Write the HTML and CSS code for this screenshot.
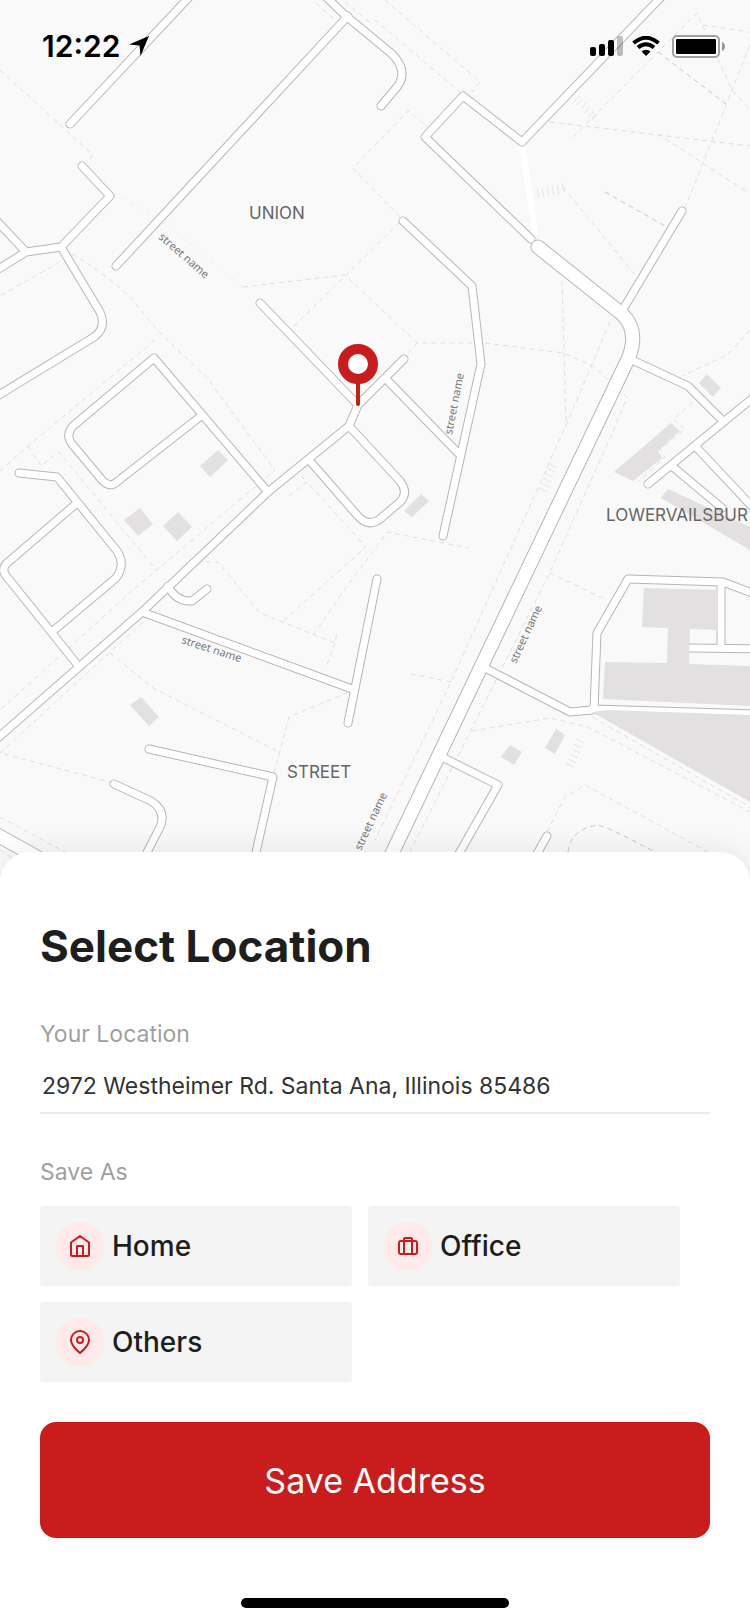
FILE: index.html
```html
<!DOCTYPE html>
<html lang="en">
<head>
<meta charset="utf-8">
<meta name="viewport" content="width=device-width, initial-scale=1">
<title>Select Location</title>
<link rel="stylesheet" href="styles.css">
</head>
<body>
<main class="screen">
  <section class="map" aria-label="Map">
    <svg class="map-canvas" viewBox="0 0 750 882">
      <defs>
        <g id="roads">
          <path d="M194 -8L70 124M348 16L116 266M324 -5L346 16L392 54Q409 71 397 87L381 106"/>
          <path d="M82 166L110 196L61 247L26 252L-6 218M26 252L-8 273M61 247L100 312Q107 328 94 337L-6 398"/>
          <path d="M201 416L118 481Q110 489 102 480L72 444Q65 435 73 426L154 358L268 492"/>
          <path d="M-8 743L142 612L268 492L349 426L358 405L404 359M260 303L357 404M388 381L458 453M403 221L472 286L481 364L443 536"/>
          <path d="M310 461L357 515Q368 528 380 519L400 502Q409 493 400 481L349 426"/>
          <path d="M19 473L57 477L117 551Q126 565 116 578L53 631M77 503L6 564Q1 570 7 577L76 663"/>
          <path d="M168 586Q176 602 192 601L207 589M142 612L352 689M377 579L348 723M149 749L273 777L252 870M114 784L151 801Q167 811 160 827L140 866"/>
          <path d="M682 211L622 311M666 -8L522 142L463 96L425 137L531 239"/>
          <path d="M632 360L688 386L722 420M648 484L760 392M673 467L722 508M697 448L758 513"/>
          <path d="M487 669L570 712L592 710M594 709L597 633L628 579L723 582L760 596M721 583V648M689 648L760 649M444 758L498 785L452 866M547 836L530 866"/>
        </g>
        <g id="avenues">
          <path d="M538 247L622 314Q639 330 629 357L386 866M-8 832L60 870"/>
        </g>
      </defs>
      <rect class="land" width="750" height="882"/>
      <path class="paths paths-faint" d="M115 193L163 222L243 287"/>
      <g class="paths">
        <path d="M0 70L93 155L87 163M243 287L345 275L417 343L485 343L563 353L593 366L627 397L615 427L550 572L410 852"/>
        <path d="M316 3L333 18M345 2L372 24M375 20L460 92M385 0L480 82L472 92M400 217L353 168L408 111L428 127M400 222L293 327M417 343L406 356"/>
        <path d="M72 254Q104 272 133 300L157 330L207 378L275 470L133 590L0 710M60 262L0 296"/>
        <path d="M155 340L28 446L0 471M28 446L41 466L59 452L157 571"/>
        <path d="M289 496L307 482L366 547L282 622M206 562L218 562L260 613L335 643L337 633M335 643L327 665M313 635L350 582L378 545L387 532L469 548M301 476L307 482"/>
        <path d="M143 622L0 753L110 782M110 653L153 688L279 752M274 773L289 717L347 693M0 817L67 853M0 850L30 870"/>
        <path d="M562 281L566 427M610 322L567 423L451 682L375 840M411 674L451 682M550 573L607 600"/>
        <path d="M750 330L727 355L682 376M693 402L673 419L685 429L660 449L665 457L638 482"/>
        <path d="M472 731L550 718L588 727L750 812M585 713L750 807M547 832L565 797L585 785L708 852"/>
        <path d="M573 137L697 13L732 90L750 110M703 25L750 32M750 45L685 208M550 122L750 146M658 134L703 163L747 192M563 187L635 275"/>
      </g>
      <g class="paths paths-strong">
        <path d="M658 52L726 104M605 192L665 226M568 852Q571 829 598 825Q610 828 655 852"/>
      </g>
      <g class="steps">
        <path d="M537 189l2 9M542 188l2 9M547 187l2 9M552 186l2 9M557 185l2 9M562 183l2 9"/>
        <path d="M574 102l6 -6M577 105l6 -6M581 108l6 -6M584 113l6 -6M588 117l6 -6M592 120l6 -6"/>
        <path d="M549 464l8 4M547 468l8 4M545 473l8 4M543 478l8 4M541 483l8 4M539 488l8 4"/>
        <path d="M576 739l8 4M574 744l8 4M572 749l8 4M570 754l8 4M568 759l8 4M566 763l8 4"/>
      </g>
      <path class="lane" d="M522 143L535 233"/>
      <path class="building" d="M668 489L750 527V550L661 498Z"/>
      <use href="#roads" class="road-edge"/>
      <use href="#avenues" class="avenue-edge"/>
      <path class="verge-edge" d="M594 707L760 712"/>
      <use href="#roads" class="road"/>
      <use href="#avenues" class="avenue"/>
      <path class="verge" d="M592 709L760 714"/>
      <g class="building">
        <path d="M218 450L228 460L210 477L200 466ZM140 508L153 524L138 536L124 520ZM178 512L192 527L177 541L163 526ZM421 494L429 501L412 517L404 511ZM707 374L721 388L713 397L699 383Z"/>
        <path d="M671 423L680 431L658 451L662 458L633 481L614 472Z"/>
        <path d="M644 588L718 590V630L690 629L689 664L750 666V706L603 699L605 662L667 663L668 628L642 627Z"/>
        <path d="M592 712L608 710L750 715V802ZM510 745L522 752L514 765L501 757ZM556 729L565 735L555 754L545 748ZM141 697L159 717L149 726L130 705Z"/>
      </g>
      <g class="district">
        <text x="249" y="219">UNION</text>
        <text x="606" y="521">LOWERVAILSBUR</text>
        <text x="287" y="778">STREET</text>
      </g>
      <g class="street">
        <text transform="translate(158 238) rotate(41)">street name</text>
        <text transform="translate(452 435) rotate(-79)">street name</text>
        <text transform="translate(181 643) rotate(18)">street name</text>
        <text transform="translate(516 664) rotate(-65)">street name</text>
        <text transform="translate(361 851) rotate(-65)">street name</text>
      </g>
      <g class="pin">
        <path d="M358 380V404"/>
        <circle cx="358" cy="364" r="15"/>
      </g>
    </svg>
    <header class="status">
      <div class="status-group clock">
        <span>12:22</span>
        <svg width="20" height="20" viewBox="0 0 20 20" aria-hidden="true"><path d="M20 0L0 8.500L10.500 9.500L11.500 20Z"/></svg>
      </div>
      <div class="status-group">
        <svg width="33" height="20" viewBox="0 0 33 20" aria-hidden="true"><rect y="11" width="6" height="9" rx="2"/><rect x="9" y="8" width="6" height="12" rx="2"/><rect x="18" y="4" width="6" height="16" rx="2"/><rect x="27" width="6" height="20" rx="2" opacity=".25"/></svg>
        <svg class="wifi" width="28" height="20" viewBox="0 0 28 20" aria-hidden="true"><path class="arc" d="M1.500 7Q14 -3.500 26.500 7M6 11.500Q14 5 22 11.500"/><path d="M9.500 15.500Q14 12 18.500 15.500L14 20Z"/></svg>
        <svg class="battery" width="53" height="23" viewBox="0 0 53 23" aria-hidden="true"><rect class="shell" x="1" y="1" width="46" height="21" rx="4"/><rect x="4" y="4" width="40" height="15" rx="1"/><path d="M50 7Q53 8 53 11.500T50 16Z" opacity=".4"/></svg>
      </div>
    </header>
  </section>

  <form class="sheet">
    <h1>Select Location</h1>
    <label class="caption" for="address">Your Location</label>
    <input class="address" id="address" type="text" value="2972 Westheimer Rd. Santa Ana, Illinois 85486">
    <h2 class="caption" id="save-as">Save As</h2>
    <div class="options" role="group" aria-labelledby="save-as">
      <button class="option" type="button">
        <span class="badge"><svg width="24" height="24" viewBox="0 0 24 24" aria-hidden="true"><path d="M3 8.500L12 2L21 8.500V20.500Q21 22 19.500 22H4.500Q3 22 3 20.500ZM9 22V12H15V22"/></svg></span>
        Home
      </button>
      <button class="option" type="button">
        <span class="badge"><svg width="24" height="24" viewBox="0 0 24 24" aria-hidden="true"><rect x="3" y="7" width="18" height="13" rx="2"/><path d="M8 20V5Q8 4 9 4H15Q16 4 16 5V20"/></svg></span>
        Office
      </button>
      <button class="option" type="button">
        <span class="badge"><svg width="24" height="24" viewBox="0 0 24 24" aria-hidden="true"><path d="M21 10C21 16 12 23 12 23S3 16 3 10A9 9 0 0 1 21 10Z"/><circle cx="12" cy="10" r="3"/></svg></span>
        Others
      </button>
    </div>
    <button class="save" type="submit">Save Address</button>
    <div class="home-bar"></div>
  </form>
</main>
</body>
</html>
```
FILE: styles.css
```css
* { box-sizing: border-box; }

body {
  margin: 0;
  background: #fff;
  color: #1e1e1e;
  font-family: Inter, "Liberation Sans", sans-serif;
}

.screen { overflow: hidden; }
.map { position: relative; }
.map-canvas { display: block; width: 100%; }

.land { fill: #f9f9f9; }
.paths { fill: none; stroke: #dfdde3; stroke-width: 1; stroke-dasharray: 5 4; }
.paths-strong { stroke: #c8c2d2; }
.paths-faint { stroke: #f0eff2; }
.steps { fill: none; stroke: #e4e2e6; stroke-width: 1; }
.road-edge, .avenue-edge, .road, .avenue, .lane, .verge, .verge-edge {
  fill: none;
  stroke-linecap: round;
  stroke-linejoin: round;
}
.road-edge { stroke: #bab5b5; stroke-width: 9; }
.avenue-edge { stroke: #bab5b5; stroke-width: 15; }
.verge-edge { stroke: #bab5b5; stroke-width: 5; }
.road { stroke: #fff; stroke-width: 7; }
.avenue { stroke: #fff; stroke-width: 13; }
.lane { stroke: #fff; stroke-width: 6; }
.verge { stroke: #fff; stroke-width: 7; }
.building { fill: #e2e0e1; }
.district { fill: #666; font-size: 17px; }
.street { fill: #777; font-family: "Noto Sans", sans-serif; font-size: 11px; }
.pin { fill: #fff; stroke: #c91c1c; stroke-linecap: round; }
.pin circle { stroke-width: 10; }
.pin path { stroke-width: 4; }

.status {
  position: absolute;
  inset: 0 0 auto;
  display: flex;
  align-items: center;
  justify-content: space-between;
  height: 92px;
  padding: 0 25px 0 42px;
}
.status-group { display: flex; align-items: center; gap: 9px; }
.clock { color: #000; font-size: 30px; font-weight: 600; }
.battery { margin-left: 3px; }
.arc { fill: none; stroke: #000; stroke-width: 4; }
.shell { fill: #fff; stroke: #a0a0a0; stroke-width: 2; }

.sheet {
  position: relative;
  display: flex;
  flex-direction: column;
  margin-top: -30px;
  padding: 64px 40px 16px;
  border-radius: 30px 30px 0 0;
  background: #fff;
  box-shadow: 0 -4px 30px rgba(0, 0, 0, 0.07);
}
h1 { margin: 0 0 42px; font-size: 44px; font-weight: 700; line-height: 60px; }
.caption {
  margin: 0;
  color: #a0a0a0;
  font-size: 23px;
  font-weight: 400;
  line-height: 32px;
}
.address {
  width: 100%;
  height: 56px;
  margin: 8px 0 42px;
  padding: 2px 2px 0;
  border: 0;
  border-bottom: 2px solid #ebebeb;
  background: none;
  color: #333;
  font: inherit;
  font-size: 23px;
}
.options {
  display: grid;
  grid-template-columns: 1fr 1fr;
  gap: 16px;
  margin: 18px 30px 40px 0;
}
.option {
  display: flex;
  align-items: center;
  gap: 8px;
  height: 80px;
  padding: 0 16px;
  border: 0;
  border-radius: 4px;
  background: #f4f4f4;
  color: #1e1e1e;
  font: inherit;
  font-size: 28px;
  font-weight: 500;
}
.badge {
  display: grid;
  place-items: center;
  width: 48px;
  height: 48px;
  border-radius: 50%;
  background: #ffe9e9;
}
.badge svg { fill: none; stroke: #c91c1c; stroke-width: 2; stroke-linejoin: round; }
.save {
  height: 116px;
  border: 0;
  border-radius: 16px;
  background: #c91c1c;
  color: #fff;
  font: inherit;
  font-size: 34px;
}
.home-bar {
  align-self: center;
  width: 40%;
  height: 10px;
  margin-top: 60px;
  border-radius: 5px;
  background: #000;
}
```
